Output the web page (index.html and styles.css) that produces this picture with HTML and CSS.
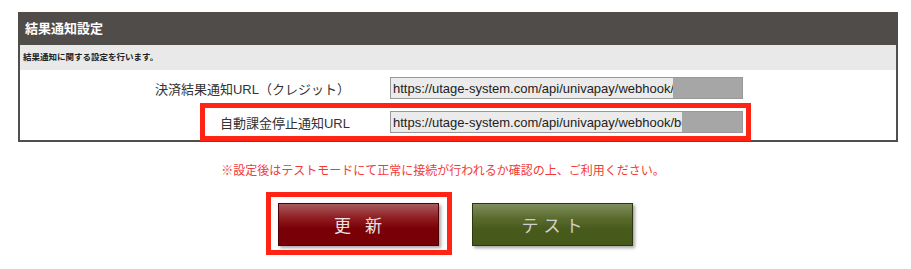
FILE: index.html
```
<!DOCTYPE html>
<html lang="ja">
<head>
    <meta charset="UTF-8">
    <meta name="viewport" content="width=device-width, initial-scale=1.0">
    <title>結果通知設定</title>
    <link rel="stylesheet" href="styles.css">
</head>
<body>

    <div class="panel">
        <div class="panel-title">結果通知設定</div>
        <div class="panel-desc">結果通知に関する設定を行います。</div>
        <div class="panel-body">
            <div class="row">
                <div class="label">決済結果通知URL（クレジット）</div>
                <div class="field">
                    <input type="text" readonly value="https://utage-system.com/api/univapay/webhook/xxxxxxxx">
                    <span class="mask mask-1"></span>
                </div>
            </div>
            <div class="row marked">
                <div class="label">自動課金停止通知URL</div>
                <div class="field">
                    <input type="text" readonly value="https://utage-system.com/api/univapay/webhook/bcxxxxxx">
                    <span class="mask mask-2"></span>
                </div>
            </div>
        </div>
    </div>

    <p class="note">※設定後はテストモードにて正常に接続が行われるか確認の上、ご利用ください。</p>

    <div class="actions">
        <div class="btn-mark">
            <button class="btn btn-update">更 新</button>
        </div>
        <button class="btn btn-test">テスト</button>
    </div>

</body>
</html>
```

FILE: styles.css
```
body {
    margin: 0;
    padding: 12px 13px 0 18px;
    font-family: "Liberation Sans", "Noto Sans CJK JP", sans-serif;
    background-color: #fff;
    color: #333;
}
.panel {
    border: 2px solid #524e4c;
    border-top: none;
}
.panel-title {
    background-color: #504c4a;
    color: #fff;
    font-size: 13px;
    font-weight: bold;
    height: 33px;
    line-height: 33px;
    margin: 0 -2px;
    padding-left: 7px;
}
.panel-desc {
    background-color: #e9e9e9;
    font-size: 8.5px;
    font-weight: bold;
    height: 25px;
    line-height: 25px;
    padding-left: 3px;
    color: #222;
}
.panel-body {
    padding: 7px 0 7px 0;
    display: flex;
    flex-direction: column;
    gap: 12px;
}
.row {
    display: grid;
    grid-template-columns: 330px 353px;
    column-gap: 40px;
    align-items: center;
    height: 22px;
    position: relative;
}
.label {
    text-align: right;
    font-size: 13px;
    color: #333;
    white-space: nowrap;
}
.marked::after {
    content: "";
    position: absolute;
    top: -8px;
    left: 180px;
    width: 551px;
    height: 38px;
    border: 5px solid #ff2414;
    box-sizing: border-box;
}
.field {
    position: relative;
    height: 22px;
}
.field input {
    box-sizing: border-box;
    width: 353px;
    height: 22px;
    margin: 0;
    padding: 0 2px;
    border: 1px solid #999;
    background-color: #ebebeb;
    font-family: "Liberation Sans", sans-serif;
    font-size: 13px;
    color: #222;
    outline: none;
}
.mask {
    position: absolute;
    top: 1px;
    right: 1px;
    height: 20px;
    background-color: #a6a6a6;
}
.mask-1 {
    left: 283px;
}
.mask-2 {
    left: 292px;
}
.note {
    margin: 22px 30px 0 0;
    text-align: center;
    font-size: 12px;
    line-height: 14px;
    color: #f23a3a;
}
.actions {
    display: flex;
    justify-content: center;
    align-items: flex-start;
    gap: 20px;
    margin-top: 14px;
    padding-right: 18px;
}
.btn-mark {
    border: 5px solid #ff2414;
    padding: 6px 8px 4px 7px;
}
.btn {
    width: 161px;
    height: 43px;
    font-family: "Noto Sans CJK JP", sans-serif;
    font-size: 17px;
    letter-spacing: 5px;
    padding: 0 0 0 5px;
    cursor: pointer;
    box-shadow: 2px 2px 3px rgba(0, 0, 0, 0.35);
}
.btn-update {
    background: linear-gradient(#a65a5d 0%, #8e1c20 35%, #7a0007 60%, #770006 100%);
    border: 1px solid #4e0004;
    color: #ece4e4;
}
.btn-test {
    margin-top: 11px;
    background: linear-gradient(#7f8e5c 0%, #5a6b2e 35%, #485b1c 60%, #45591a 100%);
    border: 1px solid #2c3710;
    color: #cfcfcf;
}
```
